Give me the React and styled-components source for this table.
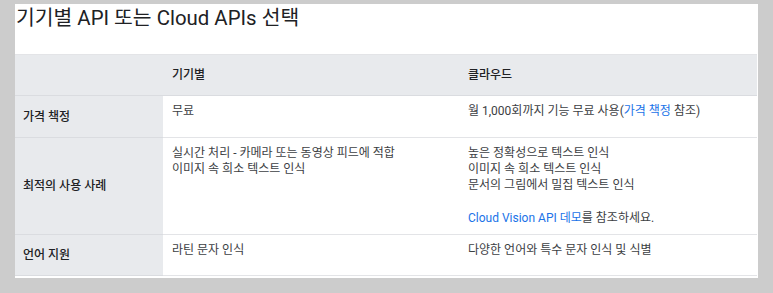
import React from 'react'
import styled, { createGlobalStyle } from 'styled-components'

const GlobalStyle = createGlobalStyle`
  html, body {
    margin: 0;
    padding: 0;
    background: #cccccc;
  }
  body {
    font-family: Roboto, "Noto Sans CJK KR", sans-serif;
    -webkit-font-smoothing: antialiased;
  }
`

const Page = styled.div`
  width: 773px;
  height: 293px;
  box-sizing: border-box;
  padding: 15px 15px 0 15px;
  background: #cccccc;
  overflow: hidden;
`

const Card = styled.div`
  width: 743px;
  box-sizing: border-box;
  background: #ffffff;
  padding: 0 1px 2px 0;
`

const Title = styled.h2`
  margin: -11px 0 22px 1px;
  font-size: 20.4px;
  line-height: 28px;
  font-weight: 400;
  color: #202124;
  white-space: nowrap;
`

const Table = styled.div`
  display: grid;
  grid-template-columns: 148px 296px 1fr;
  grid-template-rows: 41px 42px 97px 41px;
  border-top: 1px solid #e3e4e7;
  font-size: 12px;
  line-height: 16px;
  color: #3c4043;
`

const HeadCell = styled.div`
  background: #e8eaed;
  border-bottom: 1px solid #dadce0;
  padding: 0 9px;
  display: flex;
  align-items: center;
  font-weight: 500;
  color: #202124;
`

const LabelCell = styled.div`
  background: #e8eaed;
  border-bottom: 1px solid #dadce0;
  padding: 0 8px;
  display: flex;
  align-items: center;
  font-weight: 500;
  color: #202124;
`

const Cell = styled.div`
  background: #ffffff;
  border-bottom: 1px solid #e3e4e7;
  padding: 7px 9px 0;
`

const Para = styled.p`
  margin: 0 0 17px;
  &:last-child {
    margin-bottom: 0;
  }
`

const Link = styled.a`
  color: #1a73e8;
  text-decoration: none;
`

export default function App() {
  return (
    <Page>
      <GlobalStyle />
      <Card>
        <Title>기기별 API 또는 Cloud APIs 선택</Title>
        <Table>
          <HeadCell />
          <HeadCell>기기별</HeadCell>
          <HeadCell>클라우드</HeadCell>

          <LabelCell>가격 책정</LabelCell>
          <Cell>무료</Cell>
          <Cell>
            월 1,000회까지 기능 무료 사용(<Link href="#">가격 책정</Link> 참조)
          </Cell>

          <LabelCell>최적의 사용 사례</LabelCell>
          <Cell>
            실시간 처리 - 카메라 또는 동영상 피드에 적합
            <br />
            이미지 속 희소 텍스트 인식
          </Cell>
          <Cell>
            <Para>
              높은 정확성으로 텍스트 인식
              <br />
              이미지 속 희소 텍스트 인식
              <br />
              문서의 그림에서 밀집 텍스트 인식
            </Para>
            <Para>
              <Link href="#">Cloud Vision API 데모</Link>를 참조하세요.
            </Para>
          </Cell>

          <LabelCell>언어 지원</LabelCell>
          <Cell>라틴 문자 인식</Cell>
          <Cell>다양한 언어와 특수 문자 인식 및 식별</Cell>
        </Table>
      </Card>
    </Page>
  )
}
